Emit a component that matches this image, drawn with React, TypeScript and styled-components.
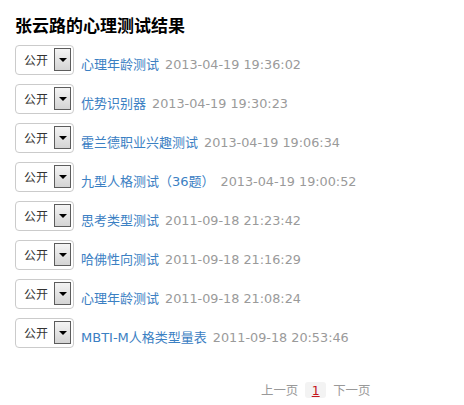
import React from 'react';
import styled, { createGlobalStyle } from 'styled-components';

const Global = createGlobalStyle`
  body {
    margin: 0;
    background: #fff;
    font-family: "DejaVu Sans", "Noto Sans CJK SC", sans-serif;
  }
`;

const Page = styled.div`
  padding: 15px 0 0 15px;
  width: 449px;
`;

const Title = styled.h2`
  margin: 0 0 10px;
  font-family: "Noto Sans CJK SC", sans-serif;
  font-size: 17px;
  line-height: 20px;
  font-weight: 700;
  color: #000;
`;

const List = styled.div`
  display: flex;
  flex-direction: column;
  gap: 9px;
`;

const Row = styled.div`
  display: flex;
  align-items: center;
  height: 30px;
`;

const Select = styled.div`
  box-sizing: border-box;
  width: 59px;
  height: 30px;
  border: 1px solid #cbcbcb;
  border-radius: 4px;
  background: #fff;
  display: flex;
  align-items: center;
  padding-left: 8px;
  margin-right: 7px;
  flex-shrink: 0;
`;

const SelectText = styled.span`
  font-family: "Noto Sans CJK SC", sans-serif;
  font-size: 12px;
  color: #333;
  width: 24px;
  margin-right: 6px;
  margin-top: -1px;
`;

const Arrow = styled.span`
  box-sizing: border-box;
  width: 17px;
  height: 23px;
  border: 1px solid #5c5c5c;
  background: linear-gradient(#f4f4f4, #d4d4d4);
  display: flex;
  align-items: center;
  justify-content: center;
  margin-top: -1px;

  &::after {
    content: '';
    border-left: 4px solid transparent;
    border-right: 4px solid transparent;
    border-top: 4px solid #000;
  }
`;

const Info = styled.div`
  padding-top: 7px;
  white-space: nowrap;
`;

const TestLink = styled.a`
  font-size: 13px;
  color: #3b80c3;
  text-decoration: none;
  margin-right: 6px;
`;

const Time = styled.span`
  font-size: 12.8px;
  color: #9a9a9a;
`;

const Pager = styled.div`
  display: flex;
  align-items: center;
  gap: 7px;
  margin-top: 33px;
  padding-left: 246px;
  font-family: "Noto Sans CJK SC", sans-serif;
  font-size: 12.4px;
  color: #999;
`;

const PageNum = styled.span<{ $current?: boolean }>`
  display: inline-flex;
  justify-content: center;
  align-items: center;
  width: 21px;
  height: 16px;
  border-radius: 3px;
  background: ${(p) => (p.$current ? '#f3f3f3' : 'transparent')};
  color: ${(p) => (p.$current ? '#c4151c' : '#999')};
  text-decoration: underline;
  font-family: "DejaVu Sans", sans-serif;
  font-size: 12.5px;
`;

const results = [
  { name: '心理年龄测试', time: '2013-04-19 19:36:02' },
  { name: '优势识别器', time: '2013-04-19 19:30:23' },
  { name: '霍兰德职业兴趣测试', time: '2013-04-19 19:06:34' },
  { name: '九型人格测试（36题）', time: '2013-04-19 19:00:52' },
  { name: '思考类型测试', time: '2011-09-18 21:23:42' },
  { name: '哈佛性向测试', time: '2011-09-18 21:16:29' },
  { name: '心理年龄测试', time: '2011-09-18 21:08:24' },
  { name: 'MBTI-M人格类型量表', time: '2011-09-18 20:53:46' },
];

export default function App() {
  return (
    <Page>
      <Global />
      <Title>张云路的心理测试结果</Title>
      <List>
        {results.map((r, i) => (
          <Row key={i}>
            <Select>
              <SelectText>公开</SelectText>
              <Arrow />
            </Select>
            <Info>
              <TestLink href="#">{r.name}</TestLink>
              <Time>{r.time}</Time>
            </Info>
          </Row>
        ))}
      </List>
      <Pager>
        <span>上一页</span>
        <PageNum $current>1</PageNum>
        <span>下一页</span>
      </Pager>
    </Page>
  );
}
